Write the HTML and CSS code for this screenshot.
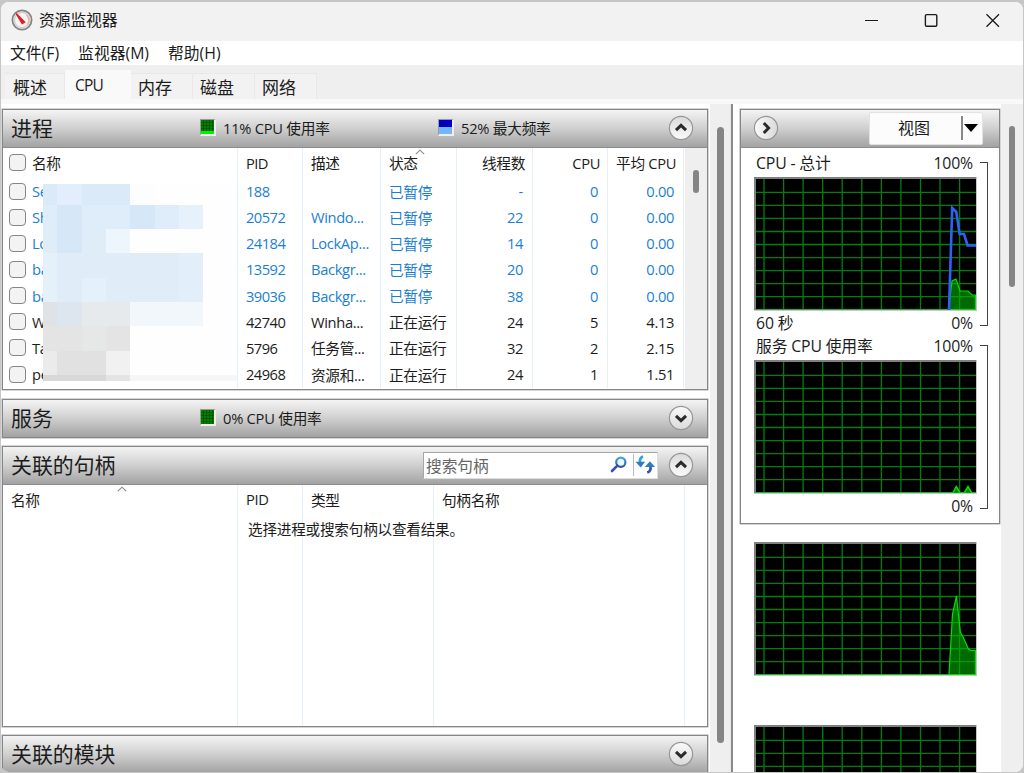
FILE: index.html
```html
<!DOCTYPE html>
<html lang="zh-CN">
	<head>
		<meta charset="UTF-8">
		<title>资源监视器</title>
		<link rel="stylesheet" href="styles.css">
	</head>
	<body>
		<!-- 公用图形 -->
		<svg class="defs" width="0" height="0">
			<defs>
				<linearGradient id="ball" x1="0" y1="0" x2="0" y2="1">
					<stop offset="0" stop-color="#fafafa"/>
					<stop offset="1" stop-color="#dadada"/>
				</linearGradient>
				<linearGradient id="blue" x1="0" y1="0" x2="0" y2="1">
					<stop offset="0" stop-color="#3fa9dc"/>
					<stop offset="1" stop-color="#3054a8"/>
				</linearGradient>
				<symbol id="down" viewBox="0 0 26 26">
					<circle cx="13" cy="13" r="11.6" fill="url(#ball)" stroke="#969696" stroke-width="1.2"/>
					<path d="M8 10.8L13 15.6L18 10.8" fill="none" stroke="#2b2b2b" stroke-width="3"/>
				</symbol>
				<symbol id="grid" viewBox="0 0 223 134">
					<rect width="223" height="134" fill="#c9c9c9"/>
					<rect width="222" height="133" fill="#808080"/>
					<rect x="2" y="2" width="220" height="131" fill="#000"/>
					<path d="M10 2v131M29.6 2v131M49.1 2v131M68.7 2v131M88.2 2v131M107.8 2v131M127.4 2v131M146.9 2v131M166.5 2v131M186 2v131M205.6 2v131M2 15.3h220M2 28.4h220M2 41.4h220M2 54.5h220M2 67.5h220M2 80.6h220M2 93.6h220M2 106.7h220M2 119.7h220" fill="none" stroke="#007f10" stroke-width="1.3"/>
					<path d="M2 132.5h220" stroke="#12b82a"/>
				</symbol>
			</defs>
		</svg>
		<div class="window">
			<div class="title">
				<svg class="logo" width="22" height="22" viewBox="0 0 22 22">
					<circle cx="11" cy="11" r="9.6" fill="#f6f4f2" stroke="#858585" stroke-width="1.8"/>
					<circle cx="11" cy="11" r="7.6" fill="none" stroke="#cfcac6" stroke-width="1.2"/>
					<path d="M15.5 6a7 7 0 0 1 1 9.5" fill="none" stroke="#eab69c" stroke-width="1.6"/>
					<path d="M5.2 4.6L13.6 13.2L11.2 14.6Z" fill="#dc1f26" stroke="#dc1f26" stroke-width="1.4"/>
				</svg>
				<span>资源监视器</span>
				<svg class="ctrl" width="140" height="20" viewBox="0 0 140 20">
					<path d="M1 10.5h13" stroke="#1a1a1a" stroke-width="1.2"/>
					<rect x="61.4" y="4.6" width="11.4" height="11.6" rx="1.2" fill="none" stroke="#1a1a1a" stroke-width="1.4"/>
					<path d="M122.5 4.2L135 16.8M135 4.2L122.5 16.8" stroke="#1a1a1a" stroke-width="1.3"/>
				</svg>
			</div>
			<div class="menu"><span>文件(F)</span><span>监视器(M)</span><span>帮助(H)</span></div>
			<div class="tabs">
				<span>概述</span><span class="ac">CPU</span><span>内存</span><span>磁盘</span><span>网络</span>
			</div>
			<div class="content">
				<div class="left">
					<div class="panel process">
						<div class="bar">
							<h2>进程</h2>
							<i class="led led1"></i><span class="info info1">11% CPU 使用率</span>
							<i class="led led2"></i><span class="info">52% 最大频率</span>
							<svg class="btn up" width="26" height="26"><use href="#down"/></svg>
						</div>
						<div class="list">
							<div class="rows">
								<div class="row head"><div><i class="check"></i>名称</div><div>PID</div><div>描述</div><div class="sort">状态<svg width="10" height="6" viewBox="0 0 10 6"><path d="M.8 5.2L5 1.2L9.2 5.2" fill="none" stroke="#8a8a8a" stroke-width="1.1"/></svg></div><div>线程数</div><div>CPU</div><div>平均 CPU</div></div>
								<div class="row pause"><div><i class="check"></i>Se</div><div>188</div><div></div><div>已暂停</div><div>-</div><div>0</div><div>0.00</div></div>
								<div class="row pause"><div><i class="check"></i>Sh</div><div>20572</div><div>Windo...</div><div>已暂停</div><div>22</div><div>0</div><div>0.00</div></div>
								<div class="row pause"><div><i class="check"></i>Lo</div><div>24184</div><div>LockAp...</div><div>已暂停</div><div>14</div><div>0</div><div>0.00</div></div>
								<div class="row pause"><div><i class="check"></i>ba</div><div>13592</div><div>Backgr...</div><div>已暂停</div><div>20</div><div>0</div><div>0.00</div></div>
								<div class="row pause"><div><i class="check"></i>ba</div><div>39036</div><div>Backgr...</div><div>已暂停</div><div>38</div><div>0</div><div>0.00</div></div>
								<div class="row"><div><i class="check"></i>W</div><div>42740</div><div>Winha...</div><div>正在运行</div><div>24</div><div>5</div><div>4.13</div></div>
								<div class="row"><div><i class="check"></i>Ta</div><div>5796</div><div>任务管...</div><div>正在运行</div><div>32</div><div>2</div><div>2.15</div></div>
								<div class="row"><div><i class="check"></i>pe</div><div>24968</div><div>资源和...</div><div>正在运行</div><div>24</div><div>1</div><div>1.51</div></div>
								<!-- 名称打码 -->
								<svg class="mosaic" width="194" height="198" viewBox="43 183 194 198" shape-rendering="crispEdges">
									<rect x="43" y="183" width="194" height="198" fill="#fefefe"/>
									<path d="M43 183.5h87v21H43z" fill="#dbeaf8"/>
									<path d="M57.3 183.5h24.4v21H57.3z" fill="#e2eefb"/>
									<path d="M130 183.5h25v21h-25z" fill="#fbfdff"/>
									<path d="M43 204.5h160v24H43z" fill="#deedf9"/>
									<path d="M57.3 204.5h24.4v48.5H57.3zM130 204.5h25v24h-25z" fill="#d6e8f7"/>
									<path d="M179 204.5h24.3v24H179z" fill="#e6f1fb"/>
									<path d="M43 228.5h14.3V253H43zM81.7 228.5H106V253H81.7z" fill="#dfedf9"/>
									<path d="M106 228.5h24V253h-24z" fill="#edf5fd"/>
									<path d="M43 253h160.3v49H43z" fill="#e0edf9"/>
									<path d="M81.7 277.5h24.3v24.5H81.7zM43 253h14.3v49H43z" fill="#e4f0fa"/>
									<path d="M179 253h24.3v49H179z" fill="#e2effa"/>
									<path d="M43 302h14.3v24H43z" fill="#dfe2e7"/>
									<path d="M57.3 302h24.4v24H57.3z" fill="#dde5ef"/>
									<path d="M81.7 302H130v24H81.7z" fill="#e6eaed"/>
									<path d="M130 302h73.3v24H130z" fill="#f2f7fc"/>
									<path d="M43 326h87v24.5H43z" fill="#e4e4e4"/>
									<path d="M81.7 326H106v24.5H81.7z" fill="#e6e8e7"/>
									<path d="M43 350.5h14.3V375H43z" fill="#ebebeb"/>
									<path d="M57.3 350.5H106V375H57.3z" fill="#e1e1e1"/>
									<path d="M106 350.5h24V375h-24z" fill="#f1f1f1"/>
									<path d="M43 375h63v6H43z" fill="#d8d8d8"/>
									<path d="M106 375h24v6h-24z" fill="#e4e4e4"/>
									<path d="M130 375h107v6H130z" fill="#f6f6f6"/>
								</svg>
							</div>
							<div class="scroll"><i></i></div>
						</div>
					</div>
					<div class="panel service">
						<div class="bar">
							<h2>服务</h2>
							<i class="led"></i><span class="info">0% CPU 使用率</span>
							<svg class="btn" width="26" height="26"><use href="#down"/></svg>
						</div>
					</div>
					<div class="panel handle">
						<div class="bar">
							<h2>关联的句柄</h2>
							<div class="search">
								<span>搜索句柄</span>
								<svg width="18" height="18" viewBox="0 0 18 18">
									<circle cx="10.8" cy="6.2" r="4.6" fill="#eef6fd" stroke="url(#blue)" stroke-width="2.2"/>
									<path d="M7.4 9.6L2 15" stroke="#3054a8" stroke-width="2.6" stroke-linecap="round"/>
								</svg>
								<svg class="refresh" width="24" height="22" viewBox="0 0 24 22">
									<path d="M9.5 2.2C6.8 2.8 5.8 5 6.3 8.5" fill="none" stroke="#35a3da" stroke-width="2.8"/>
									<path d="M1.6 7.6L11.6 7.6L7 13.6Z" fill="#3478bd"/>
									<path d="M17.2 12.5C17.8 16 16.4 18 13.8 18.9" fill="none" stroke="#3054a8" stroke-width="2.8"/>
									<path d="M11.4 13.2L16.6 7.2L22 13.2Z" fill="#3478bd"/>
								</svg>
							</div>
							<svg class="btn up" width="26" height="26"><use href="#down"/></svg>
						</div>
						<div class="list">
							<div class="cols"><div class="sort">名称<svg width="10" height="6" viewBox="0 0 10 6"><path d="M.8 5.2L5 1.2L9.2 5.2" fill="none" stroke="#8a8a8a" stroke-width="1.1"/></svg></div><div>PID</div><div>类型</div><div>句柄名称</div></div>
							<p class="tip">选择进程或搜索句柄以查看结果。</p>
						</div>
					</div>
					<div class="panel module">
						<div class="bar">
							<h2>关联的模块</h2>
							<svg class="btn" width="26" height="26"><use href="#down"/></svg>
						</div>
					</div>
				</div>
				<div class="scroll main"><i></i></div>
				<div class="right">
					<div class="panel">
						<div class="bar">
							<svg class="btn next" width="26" height="26"><use href="#down"/></svg>
							<div class="view"><span>视图</span><i></i><b></b></div>
						</div>
						<div class="chart">
							<div class="graph">
								<div class="label"><span>CPU - 总计</span><span>100%</span></div>
								<svg width="223" height="134" viewBox="0 0 223 134">
									<use href="#grid"/>
									<path d="M194.5 132.5L198 104L202 102L206 114H214L218 118H221.5V132.5Z" fill="#00b000" fill-opacity=".6" stroke="#00e000" stroke-width="1.2"/>
									<path d="M195 133L198.2 31L202.3 35L205.6 57H210L213.6 68.5H222" fill="none" stroke="#2d62f5" stroke-width="2.6"/>
								</svg>
								<div class="label"><span>60 秒</span><span>0%</span></div>
							</div>
							<i class="bracket"></i>
						</div>
						<div class="chart">
							<div class="graph">
								<div class="label"><span>服务 CPU 使用率</span><span>100%</span></div>
								<svg width="223" height="134" viewBox="0 0 223 134">
									<use href="#grid"/>
									<path d="M199 132.5L202.3 126.5L205.8 132.5M210.5 132.5L214 126.5L217.5 132.5" fill="#008000" stroke="#00e000" stroke-width="1.5"/>
								</svg>
								<div class="label"><span></span><span>0%</span></div>
							</div>
							<i class="bracket"></i>
						</div>
					</div>
					<svg class="core" width="223" height="134" viewBox="0 0 223 134">
						<use href="#grid"/>
						<path d="M195 132.5L198.5 72L202.5 54L206.3 90L209 95L214.5 107L217 108.5H221.5V132.5Z" fill="#00b000" fill-opacity=".6" stroke="#00e000" stroke-width="1.2"/>
					</svg>
					<svg class="core" width="223" height="134" viewBox="0 0 223 134">
						<use href="#grid"/>
					</svg>
				</div>
				<div class="scroll side"><i></i></div>
			</div>
		</div>
	</body>
</html>
```

FILE: styles.css
```css
*{margin: 0;padding: 0;box-sizing: border-box;}
i,b{display: block;font-style: normal;flex: none;}
svg{display: block;flex: none;}
body{width: 1024px;height: 773px;overflow: hidden;background: #c6c6c6;color: #1c1c1c;font-family: "Open Sans","Noto Sans CJK SC",sans-serif;font-size: 14.7px;letter-spacing: -0.35px;white-space: nowrap;}
.defs{position: absolute;}
.window{width: 1022px;height: 770px;margin: 2px 1px 1px;background: #fff;border-radius: 8px;overflow: hidden;}

.title{height: 39px;background: #f2f2f2;display: flex;align-items: center;padding-left: 10px;font-size: 15.8px;letter-spacing: -0.1px;}
.title .logo{margin-right: 6px;margin-top: -3px;}
.title span{margin-top: -4px;}
.title .ctrl{margin: -3px 19px 0 auto;}
.menu{height: 24px;display: flex;align-items: center;padding: 0 0 2px 9px;gap: 19px;font-size: 15.8px;letter-spacing: 0;}
.tabs{height: 39px;background: #efefef;border-bottom: 5px solid #f9f9f9;display: flex;align-items: flex-end;padding-left: 4px;font-size: 17px;letter-spacing: 0;}
.tabs span{height: 26px;line-height: 27px;width: 62px;padding-left: 7px;background: #f2f2f2;border: 1px solid #e8e8e8;border-bottom: 0;border-left: 0;}
.tabs span:first-child{width: 60px;padding-left: 8px;}
.tabs .ac{width: 66px;height: 29px;line-height: 30px;padding-left: 10px;font-size: 15.5px;letter-spacing: -0.8px;background: #f9f9f9;border: 0;}

.content{height: 668px;display: flex;}
.left{width: 709px;padding: 5px 0 0 1px;flex: none;}
.panel{width: 706px;border: 1px solid #868686;box-shadow: 0 0 0 .5px #aaa;overflow: hidden;}
.bar{height: 38px;background: linear-gradient(#f4f4f4,#cfcfcf 50%,#a2a2a2);border-bottom: 1px solid #8c8c8c;display: flex;align-items: center;padding: 0 13px 0 8px;}
.bar h2{width: 189px;margin-top: -4px;font-size: 20.9px;font-weight: normal;letter-spacing: 0;}
.btn{margin: -2px 0 0 auto;}
.up{transform: rotate(180deg);}
.led{width: 16px;height: 17px;margin: -2px 7px 0 0;border: 1px solid #999;border-right: 2px solid #eee;border-bottom: 2px solid #eee;background: repeating-linear-gradient(90deg,transparent 0 2px,rgba(0,60,0,.6) 2px 3px),repeating-linear-gradient(#008200 0 2px,#006000 2px 3px);}
.led1{box-shadow: inset 0 -3px 0 #00f000;}
.led2{background: linear-gradient(#0000c4 50%,#74b7ff 50%);}
.info{margin-top: -3px;letter-spacing: -0.25px;}
.info1{width: 215px;}

.process{height: 281px;}
.list{height: 242px;display: flex;background: #fff;}
.rows{width: 682px;position: relative;}
.row,.cols{display: grid;grid-template-columns: 235px 65px 78px 76px 76px 75px 76px;height: 26.15px;}
.row.head{height: 31px;}
.row>div,.cols>div{display: flex;align-items: center;padding: 0 0 2px 8px;border-right: 1px solid #e6f0fa;}
.row>div:first-child{padding-left: 6px;}
.row>div:nth-child(n+5){justify-content: flex-end;padding: 0 9px 2px 0;}
.row>div:nth-child(2){letter-spacing: -0.55px;}
.row.head>div:nth-child(n+5){padding-right: 7px;}
.pause{color: #1a7fd4;}
.check{width: 17px;height: 17px;margin-right: 6px;border: 1.5px solid #858585;border-radius: 4px;background: #f3f3f3;}
.sort{position: relative;}
.sort svg{position: absolute;left: 34px;top: 1px;}
.mosaic{position: absolute;left: 40px;top: 35px;}
.scroll{background: #efefef;flex: none;}
.scroll i{border-radius: 4px;background: #858585;}
.list .scroll{width: 22px;}
.list .scroll i{width: 6px;height: 23px;margin: 22px 0 0 8px;border-radius: 3px;}

.service{height: 39px;margin-top: 9px;}
.handle{height: 281px;margin-top: 8px;}
.handle .list{position: relative;}
.cols{height: 242px;width: 704px;grid-template-columns: 235px 65px 131px 251px;}
.cols>div{align-items: flex-start;padding-top: 4px;}
.cols>div:first-child{padding-left: 8px;}
.cols .sort svg{left: 114px;}
.tip{position: absolute;left: 245px;top: 33px;font-size: 14.6px;letter-spacing: -0.2px;}
.search{width: 235px;height: 27px;margin-left: auto;background: #fff;border: 1px solid #a6a6a6;border-right-color: #ddd;border-bottom-color: #ddd;display: flex;align-items: center;color: #666;font-size: 15.7px;letter-spacing: 0;}
.search span{padding-left: 2px;width: 186px;}
.search svg{margin-top: -2px;}
.search .refresh{margin-left: 5px;border-left: 1px solid #bbb;}
.search+.btn{margin-left: 10px;}
.module{height: 60px;margin-top: 8px;}

.main{width: 21px;border-right: 1px solid #e6e6e6;}
.main i{width: 7px;height: 616px;margin: 23px 0 0 7px;}
.right{width: 270px;padding: 5px 0 0 7px;border-left: 2px solid #8a8a8a;background: #fff;flex: none;}
.right .panel{width: 260px;height: 415px;}
.right .bar{padding: 0 16px 0 12px;}
.next{margin: -2px 0 0;transform: rotate(-90deg);}
.view{width: 114px;height: 33px;margin: -1px 0 0 auto;background: #fcfcfc;border: 1px solid #e2e2e2;border-radius: 2px;display: flex;align-items: center;font-size: 16px;letter-spacing: 0;}
.view span{width: 91px;padding: 0 0 3px 28px;}
.view i{width: 2px;height: 24px;background: #888;}
.view b{margin-left: 1px;border: 7px solid transparent;border-top: 8px solid #000;border-bottom: 0;}
.chart{display: flex;padding: 2px 0 0 13px;height: 183px;}
.graph{width: 223px;}
.label{display: flex;justify-content: space-between;height: 27px;line-height: 27px;padding: 0 4px 0 2px;font-size: 15.8px;letter-spacing: -0.15px;}
.graph svg+.label{height: 24px;line-height: 24px;}
.bracket{width: 8px;height: 164px;margin: 12px 0 0 3px;border: 1.5px solid #444;border-left: 0;}
.core{margin: 18px 0 0 14px;}
.core+.core{margin-top: 49px;}
.side{width: 21px;flex: 1;}
.side i{width: 6px;height: 161px;margin: 22px 0 0 8px;}
```
